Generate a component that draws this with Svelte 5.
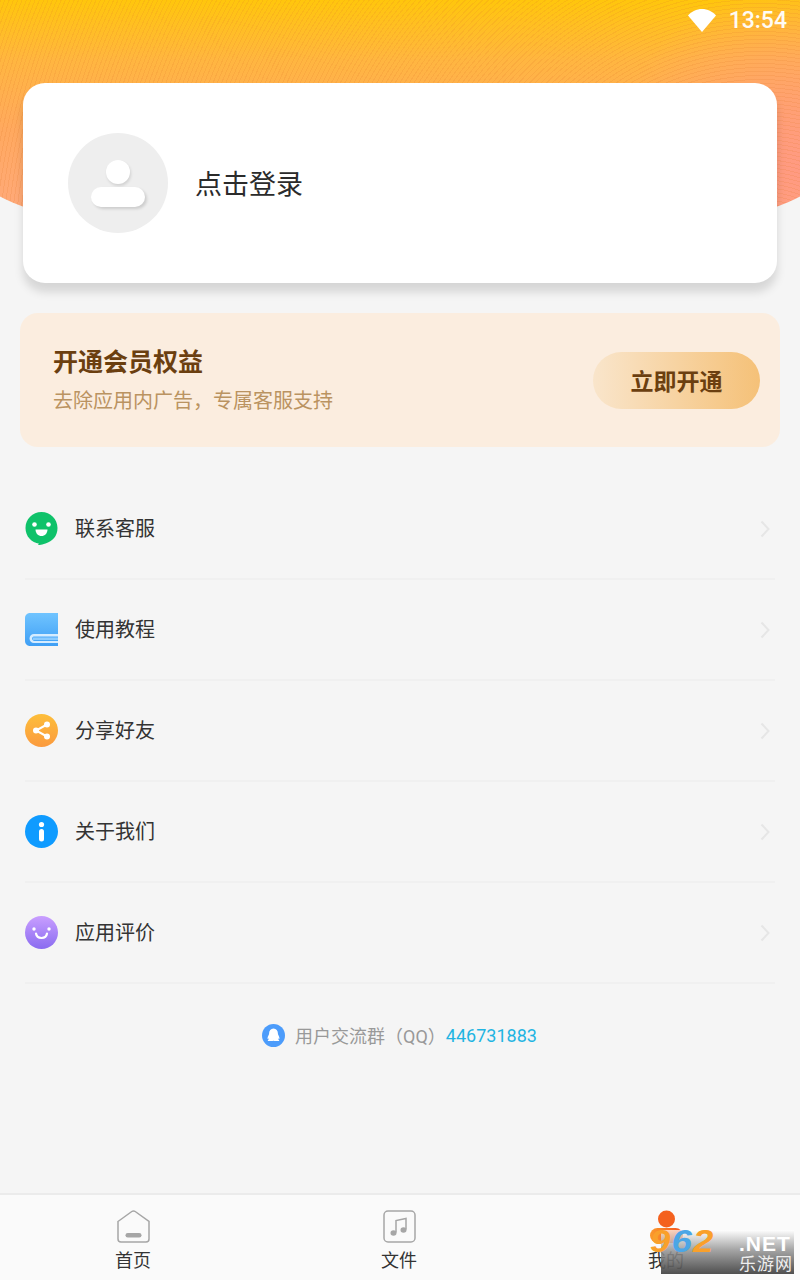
<script>
  const menu = [
    { icon: "chat", label: "联系客服" },
    { icon: "book", label: "使用教程" },
    { icon: "share", label: "分享好友" },
    { icon: "info", label: "关于我们" },
    { icon: "smile", label: "应用评价" }
  ];
</script>

<div class="page">
  <div class="hero" aria-hidden="true"></div>

  <header class="status">
    <svg class="wifi" viewBox="0 0 28 23" aria-hidden="true">
      <path d="M14 23 0 6.5C3.500 2.500 8.500 0 14 0s10.500 2.500 14 6.500z" fill="#fff" />
    </svg>
    <span class="time">13:54</span>
  </header>

  <section class="login">
    <div class="avatar">
      <span class="head"></span>
      <span class="body"></span>
    </div>
    <span class="login-text">点击登录</span>
  </section>

  <section class="vip">
    <div class="vip-copy">
      <h2>开通会员权益</h2>
      <p>去除应用内广告，专属客服支持</p>
    </div>
    <button class="vip-btn">立即开通</button>
  </section>

  <ul class="menu">
    {#each menu as item}
      <li class="row">
        <svg class="row-icon" viewBox="0 0 33 33" aria-hidden="true">
          {#if item.icon === "chat"}
            <path d="M16.500 0C25.500 0 32.500 7 32.500 16c0 8-5 13.500-12 15.500-3.500 1-5.500 1.800-7.500 1.500 1-1.200 1.400-2.300 1.300-1.300C6.500 30.500.5 24.500.5 16 .5 7 7.500 0 16.500 0z" fill="#0fc26a" />
            <circle cx="9.500" cy="12.500" r="2.300" fill="#fff" />
            <circle cx="23.500" cy="12.500" r="2.300" fill="#fff" />
            <path d="M10.500 17.500h12c0 3.800-2.700 6.500-6 6.500s-6-2.700-6-6.500z" fill="#fff" />
          {:else if item.icon === "book"}
            <defs>
              <linearGradient id="book" x1="0" y1="0" x2="0" y2="1">
                <stop offset="0" stop-color="#70c4ff" />
                <stop offset="1" stop-color="#3f9ff5" />
              </linearGradient>
            </defs>
            <path d="M5 0h28v33H5c-2.800 0-5-2.200-5-5V5c0-2.800 2.200-5 5-5z" fill="url(#book)" />
            <path d="M33 21H9c-2.500 0-4.500 2-4.500 4.500S6.500 30 9 30h24v-2H9.500c-1.300 0-2.400-1-2.400-2.500S8.200 23.500 9.500 23.500H33z" fill="#d5ecff" />
            <rect x="8" y="24.500" width="25" height="2.500" fill="#8cccff" />
          {:else if item.icon === "share"}
            <defs>
              <linearGradient id="share" x1="0" y1="0" x2="0" y2="1">
                <stop offset="0" stop-color="#fdbe3a" />
                <stop offset="1" stop-color="#fb9a3e" />
              </linearGradient>
            </defs>
            <circle cx="16.500" cy="16.500" r="16.500" fill="url(#share)" />
            <path d="M22 10.500 11 16.500l11 6" fill="none" stroke="#fff" stroke-width="2" />
            <circle cx="22" cy="10.500" r="3" fill="#fff" />
            <circle cx="11" cy="16.500" r="3" fill="#fff" />
            <circle cx="22" cy="22.500" r="3" fill="#fff" />
          {:else if item.icon === "info"}
            <circle cx="16.500" cy="16.500" r="16.500" fill="#0f9bff" />
            <circle cx="16.500" cy="9.500" r="2.600" fill="#fff" />
            <rect x="14" y="14" width="5" height="12.500" rx="2.500" fill="#fff" />
          {:else}
            <defs>
              <linearGradient id="smile" x1="0" y1="0" x2="0" y2="1">
                <stop offset="0" stop-color="#c99eff" />
                <stop offset="1" stop-color="#8a6cf0" />
              </linearGradient>
            </defs>
            <circle cx="16.500" cy="16.500" r="16.500" fill="url(#smile)" />
            <circle cx="9" cy="13" r="1.700" fill="#fff" />
            <circle cx="24" cy="13" r="1.700" fill="#fff" />
            <path d="M11 17.500c.5 3 2.700 4.500 5.500 4.500s5-1.500 5.500-4.500" fill="none" stroke="#fff" stroke-width="2.200" stroke-linecap="round" />
          {/if}
        </svg>
        <span class="row-label">{item.label}</span>
        <svg class="chevron" viewBox="0 0 10 18" aria-hidden="true">
          <path d="M1.500 1.500 8.500 9l-7 7.500" fill="none" stroke="#e6e6e6" stroke-width="2" />
        </svg>
      </li>
    {/each}
  </ul>

  <div class="group">
    <svg class="qq" viewBox="0 0 23 23" aria-hidden="true">
      <circle cx="11.500" cy="11.500" r="11.500" fill="#4c9cfb" />
      <path d="M11.500 4.500c2.800 0 4.400 2.200 4.400 4.800 0 .7 0 1 .3 1.500.7 1.200 1.400 2.600 1.200 3.900-.1.600-.7.300-1.200-.4-.1 1 .4 1.500.9 1.900.4.400.1.800-.8.800h-2.800c-.7 0-1.200-.3-2-.3s-1.300.3-2 .3H6.700c-.9 0-1.200-.4-.8-.8.500-.4 1-.9.900-1.900-.5.700-1.100 1-1.200.4-.2-1.300.5-2.700 1.200-3.900.3-.5.300-.8.300-1.500 0-2.600 1.600-4.800 4.400-4.800z" fill="#fff" />
    </svg>
    <span class="group-label">用户交流群（QQ）</span><span class="group-num">446731883</span>
  </div>

  <nav class="tabs">
    <div class="tab">
      <svg class="tab-icon" viewBox="0 0 33 33" aria-hidden="true">
        <path d="M1 11.500 14.800 1.500c1-.7 2.400-.7 3.400 0L32 11.500V29c0 1.700-1.300 3-3 3H4c-1.700 0-3-1.300-3-3z" fill="none" stroke="#a6a6a6" stroke-width="1.500" />
        <rect x="8.500" y="23" width="16" height="4.500" rx="2.250" fill="#a6a6a6" />
      </svg>
      <span>首页</span>
    </div>
    <div class="tab">
      <svg class="tab-icon" viewBox="0 0 33 33" aria-hidden="true">
        <rect x="1" y="1" width="31" height="31" rx="4" fill="none" stroke="#a6a6a6" stroke-width="1.500" />
        <path d="M13 22.500V10.500l10-2v11" fill="none" stroke="#a6a6a6" stroke-width="1.500" />
        <ellipse cx="10.500" cy="23" rx="3" ry="2.800" fill="#a6a6a6" />
        <ellipse cx="20.500" cy="20" rx="3" ry="2.800" fill="#a6a6a6" />
      </svg>
      <span>文件</span>
    </div>
    <div class="tab">
      <svg class="tab-icon" viewBox="0 0 33 33" aria-hidden="true">
        <defs>
          <linearGradient id="me" x1="0" y1="0" x2="1" y2="0">
            <stop offset="0" stop-color="#fb9a2c" />
            <stop offset="1" stop-color="#f4511e" />
          </linearGradient>
        </defs>
        <circle cx="16.500" cy="9" r="8.500" fill="#f4611e" />
        <rect x="0" y="18" width="33" height="15" rx="7.500" fill="url(#me)" />
      </svg>
      <span>我的</span>
    </div>
  </nav>

  <div class="mark" aria-hidden="true">
    <span class="mark-num"><i>9</i><b>6</b><i>2</i></span>
    <span class="mark-net">.NET</span>
    <span class="mark-cn">乐游网</span>
  </div>
</div>

<style>
  :global(body) {
    background: #f5f5f5;
  }

  .page {
    position: relative;
    display: flex;
    flex-direction: column;
    height: 1280px;
    overflow: hidden;
    background: #f5f5f5;
    font-family: Roboto, "Noto Sans CJK SC", sans-serif;
    color: #333;
  }

  .hero {
    position: absolute;
    top: 0;
    left: -20px;
    width: 840px;
    height: 248px;
    border-radius: 0 0 420px 420px / 0 0 74px 74px;
    background:
      repeating-radial-gradient(circle at 780px 300px, rgb(226 120 40 / 0.16) 0 1px, transparent 1px 4px),
      radial-gradient(circle at 820px 170px, #ff9a82 0, rgb(255 154 130 / 0) 190px),
      linear-gradient(180deg, #ffc60c 0, #ffb640 60px, #ffa95f 130px, #ffa97c 215px);
  }

  .status {
    position: relative;
    display: flex;
    align-items: center;
    justify-content: flex-end;
    gap: 13px;
    height: 41px;
    padding-right: 13px;
  }

  .wifi {
    width: 28px;
    height: 23px;
  }

  .time {
    color: #fff;
    font-size: 23px;
    font-weight: 500;
    line-height: 41px;
    opacity: 0.95;
  }

  .login {
    position: relative;
    display: flex;
    align-items: center;
    gap: 27px;
    height: 200px;
    margin: 42px 23px 0;
    padding-left: 45px;
    border-radius: 22px;
    background: #fff;
    box-shadow: 0 9px 10px rgb(0 0 0 / 0.13);
  }

  .avatar {
    position: relative;
    display: flex;
    flex-direction: column;
    align-items: center;
    flex: none;
    gap: 3px;
    width: 100px;
    height: 100px;
    padding-top: 27px;
    box-sizing: border-box;
    border-radius: 50%;
    background: #eee;
  }

  .head {
    width: 24px;
    height: 24px;
    border-radius: 50%;
    background: #fff;
    box-shadow: 1px 2px 3px rgb(0 0 0 / 0.12);
  }

  .body {
    width: 54px;
    height: 20px;
    border-radius: 10px;
    background: #fff;
    box-shadow: 2px 2px 3px rgb(0 0 0 / 0.14);
  }

  .login-text {
    font-size: 27px;
    line-height: 36px;
    color: #2b2b2b;
    margin-top: 4px;
  }

  .vip {
    display: flex;
    align-items: center;
    justify-content: space-between;
    height: 134px;
    margin: 30px 20px 0;
    padding: 0 20px 0 33px;
    border-radius: 18px;
    background: #fbeddf;
  }

  .vip-copy h2 {
    margin: 0;
    font-size: 25px;
    line-height: 34px;
    font-weight: 700;
    color: #6b3f10;
  }

  .vip-copy p {
    margin: 7px 0 0;
    font-size: 20px;
    line-height: 28px;
    color: #ba9361;
  }

  .vip-btn {
    width: 167px;
    height: 57px;
    border: 0;
    border-radius: 29px;
    background: linear-gradient(90deg, #f9e5cb, #f5c178);
    color: #6b3f10;
    font: inherit;
    font-size: 23px;
    font-weight: 700;
  }

  .menu {
    margin: 32px 25px 0;
    padding: 0;
    list-style: none;
  }

  .row {
    display: flex;
    align-items: center;
    height: 99px;
    border-bottom: 2px solid #f0f0f0;
  }

  .row-icon {
    flex: none;
    width: 33px;
    height: 33px;
  }

  .row-label {
    flex: 1;
    margin-left: 17px;
    font-size: 20px;
    line-height: 28px;
    color: #333;
  }

  .chevron {
    width: 10px;
    height: 18px;
    margin-right: 5px;
  }

  .group {
    display: flex;
    align-items: center;
    justify-content: center;
    height: 40px;
    margin-top: 31px;
    padding-right: 1px;
    font-size: 18px;
  }

  .qq {
    width: 23px;
    height: 23px;
    margin-right: 10px;
  }

  .group-label {
    color: #999;
  }

  .group-num {
    color: #1fb4e2;
  }

  .tabs {
    display: grid;
    grid-template-columns: 266px 266px 268px;
    height: 85px;
    margin-top: auto;
    border-top: 2px solid #ebebeb;
    background: #fafafa;
  }

  .tab {
    display: flex;
    flex-direction: column;
    align-items: center;
    padding-top: 15px;
    font-size: 18px;
    line-height: 25px;
    color: #333;
  }

  .tab-icon {
    width: 33px;
    height: 33px;
    margin-bottom: 5px;
  }

  .mark {
    position: absolute;
    right: 6px;
    bottom: 6px;
    width: 133px;
    height: 44px;
    background: linear-gradient(180deg, rgb(255 255 255 / 0.7) 0, rgb(150 150 150 / 0.85) 45%, rgb(70 70 70 / 0.95) 100%);
    font-family: "Liberation Sans", sans-serif;
  }

  .mark-num {
    position: absolute;
    left: -11px;
    top: -5px;
    font-size: 31px;
    line-height: 34px;
    font-weight: 700;
    font-style: italic;
    letter-spacing: 1px;
    transform: scaleX(1.18);
    transform-origin: left;
  }

  .mark-num i {
    color: #f9a02b;
  }

  .mark-num b {
    color: #4ba6e6;
  }

  .mark-net {
    position: absolute;
    left: 78px;
    top: 3px;
    font-size: 21px;
    line-height: 22px;
    font-weight: 700;
    letter-spacing: 1px;
    color: #fff;
  }

  .mark-cn {
    position: absolute;
    left: 78px;
    top: 23px;
    font-family: "Noto Sans CJK SC", sans-serif;
    font-size: 17px;
    line-height: 20px;
    letter-spacing: 1px;
    color: #eee;
  }
</style>
